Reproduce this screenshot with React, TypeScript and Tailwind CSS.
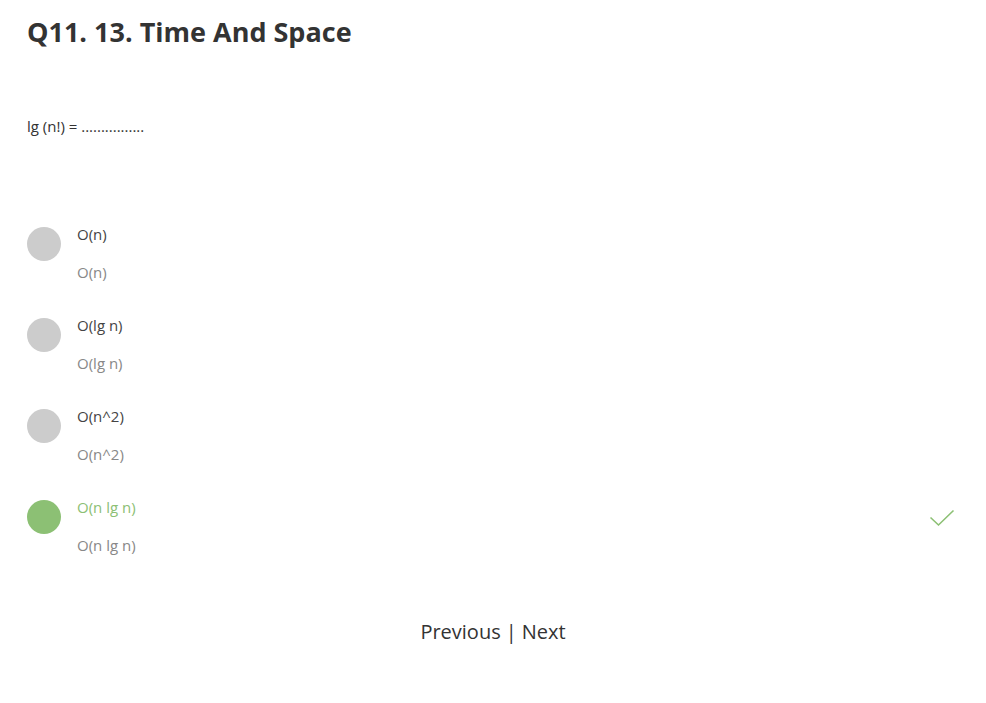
import React from "react";

const options = [
  { label: "O(n)", sub: "O(n)", correct: false },
  { label: "O(lg n)", sub: "O(lg n)", correct: false },
  { label: "O(n^2)", sub: "O(n^2)", correct: false },
  { label: "O(n lg n)", sub: "O(n lg n)", correct: true },
];

export default function App() {
  return (
    <div
      className="w-[986px] h-[703px] bg-white text-[#333333] px-[27px]"
      style={{ fontFamily: "'Open Sans', 'Noto Sans', sans-serif" }}
    >
      <h1 className="pt-[15px] text-[27px] leading-[34px] font-bold text-[#333333]">
        Q11. 13. Time And Space
      </h1>
      <p className="mt-[67px] text-[15px] leading-[20px] text-[#333333]">
        lg (n!) = ................
      </p>
      <div className="mt-[88px] flex flex-col">
        {options.map((o, i) => (
          <div key={i} className="flex items-start h-[91px]">
            <div
              className={
                "mt-[3px] w-[34px] h-[34px] rounded-full shrink-0 " +
                (o.correct ? "bg-[#8cc074]" : "bg-[#cccccc]")
              }
            />
            <div className="ml-[16px] flex-1">
              <div
                className={
                  "text-[15px] leading-[20px] " +
                  (o.correct ? "text-[#8cc074]" : "text-[#444444]")
                }
              >
                {o.label}
              </div>
              <div className="mt-[18px] text-[15px] leading-[20px] text-[#888888]">
                {o.sub}
              </div>
            </div>
            {o.correct && (
              <svg
                className="mt-[12px] mr-[4px]"
                width="26"
                height="18"
                viewBox="0 0 26 18"
                fill="none"
              >
                <path
                  d="M1.5 8.5 L9.5 16 L24.5 1.5"
                  stroke="#8cc074"
                  strokeWidth="1.6"
                />
              </svg>
            )}
          </div>
        ))}
      </div>
      <div className="mt-[30px] flex justify-center items-center text-[20px] leading-[28px] text-[#333333]">
        <span>Previous</span>
        <span className="mx-[5px]">|</span>
        <span>Next</span>
      </div>
    </div>
  );
}
